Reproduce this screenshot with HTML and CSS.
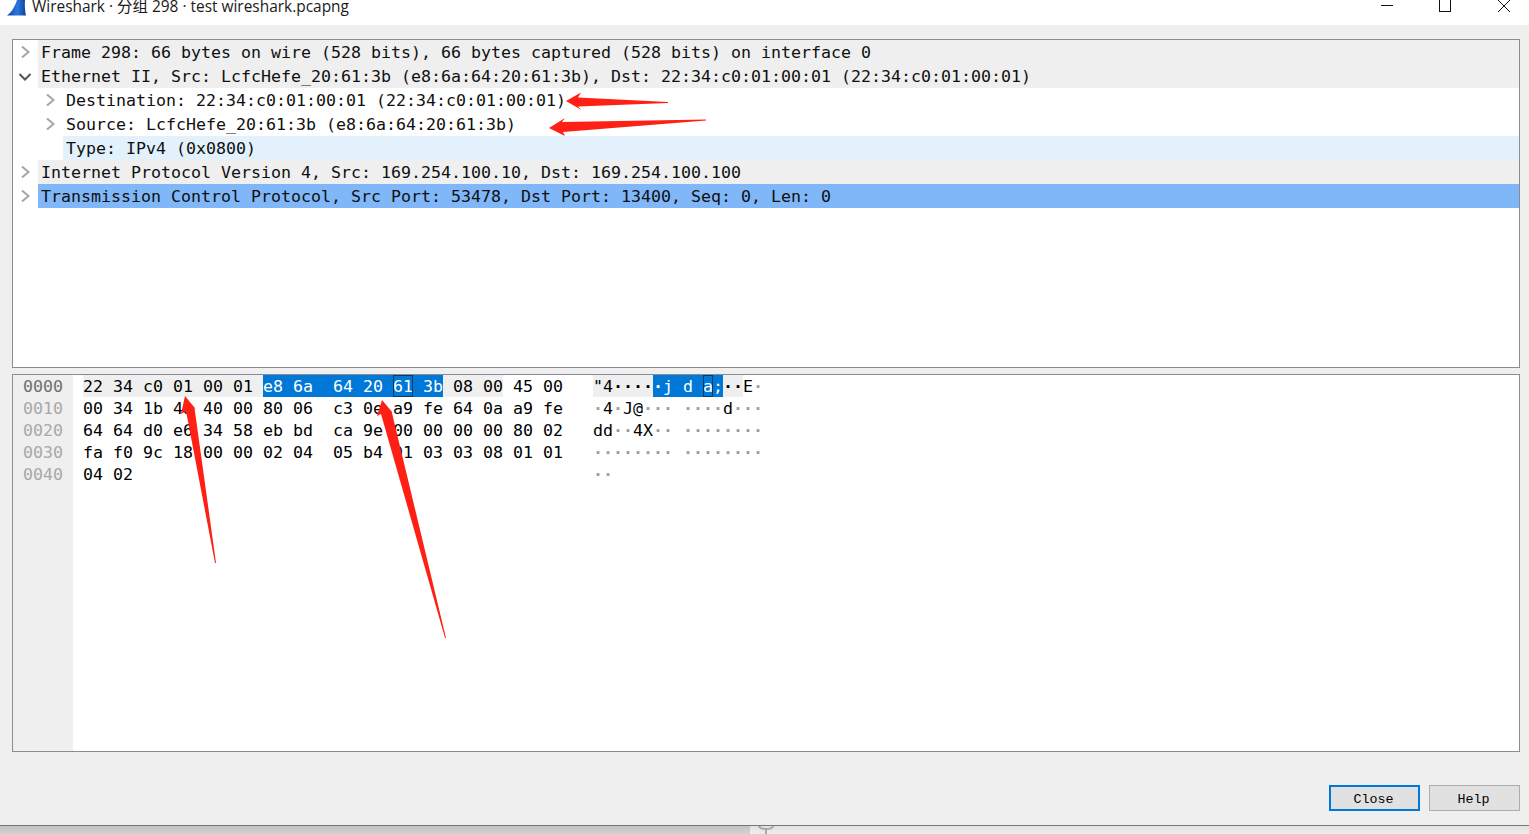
FILE: index.html
```html
<!DOCTYPE html>
<html lang="en">
<head>
<meta charset="utf-8">
<title>Wireshark</title>
<link rel="stylesheet" href="styles.css">
</head>
<body>
<div class="window">
  <header class="titlebar">
    <svg class="app-icon" viewBox="0 0 20 16" width="20" height="16"><defs><linearGradient id="fin" x1="0" y1="0" x2="1" y2="0"><stop offset="0" stop-color="#0b3fa8"/><stop offset="0.55" stop-color="#2a78de"/><stop offset="1" stop-color="#0d3f9a"/></linearGradient></defs><path d="M0 15.500C5 12 8 6 10 0H18C17.500 5 18 11 19 15.500Z" fill="url(#fin)"/></svg>
    <span class="title">Wireshark · 分组 298 · test wireshark.pcapng</span>
    <div class="controls">
      <svg class="ctl ctl-min" width="12" height="12" viewBox="0 0 12 12"><path d="M0 5.500H12" stroke="#111" fill="none"/></svg>
      <svg class="ctl ctl-max" width="13" height="12" viewBox="0 0 13 12"><rect x="0.500" y="-1" width="11" height="12.500" stroke="#111" fill="none"/></svg>
      <svg class="ctl ctl-close" width="12" height="12" viewBox="0 0 12 12"><path d="M0 0L12 12M12 0L0 12" stroke="#111" fill="none"/></svg>
    </div>
  </header>

  <main class="body">
    <section class="tree">
      <div class="row top"><span class="twisty"><svg width="9" height="12" viewBox="0 0 9 12"><path d="M1 0.500L7.500 6L1 11.500" class="chev"/></svg></span><span class="label">Frame 298: 66 bytes on wire (528 bits), 66 bytes captured (528 bits) on interface 0</span></div>
      <div class="row top"><span class="twisty"><svg width="13" height="9" viewBox="0 0 13 9"><path d="M0.500 2L6 7.500L11.500 2" class="chev open"/></svg></span><span class="label">Ethernet II, Src: LcfcHefe_20:61:3b (e8:6a:64:20:61:3b), Dst: 22:34:c0:01:00:01 (22:34:c0:01:00:01)</span></div>
      <div class="row child"><span class="twisty"><svg width="9" height="12" viewBox="0 0 9 12"><path d="M1 0.500L7.500 6L1 11.500" class="chev"/></svg></span><span class="label">Destination: 22:34:c0:01:00:01 (22:34:c0:01:00:01)</span></div>
      <div class="row child"><span class="twisty"><svg width="9" height="12" viewBox="0 0 9 12"><path d="M1 0.500L7.500 6L1 11.500" class="chev"/></svg></span><span class="label">Source: LcfcHefe_20:61:3b (e8:6a:64:20:61:3b)</span></div>
      <div class="row child related"><span class="twisty"></span><span class="label">Type: IPv4 (0x0800)</span></div>
      <div class="row top"><span class="twisty"><svg width="9" height="12" viewBox="0 0 9 12"><path d="M1 0.500L7.500 6L1 11.500" class="chev"/></svg></span><span class="label">Internet Protocol Version 4, Src: 169.254.100.10, Dst: 169.254.100.100</span></div>
      <div class="row top selected"><span class="twisty"><svg width="9" height="12" viewBox="0 0 9 12"><path d="M1 0.500L7.500 6L1 11.500" class="chev"/></svg></span><span class="label">Transmission Control Protocol, Src Port: 53478, Dst Port: 13400, Seq: 0, Len: 0</span></div>
    </section>

    <section class="bytes">
      <div class="offsets">
        <div class="line off-active">0000</div>
        <div class="line">0010</div>
        <div class="line">0020</div>
        <div class="line">0030</div>
        <div class="line">0040</div>
      </div>
      <div class="hex">
        <div class="line"><span class="shade">22 34 c0 01 00 01 </span><span class="sel">e8 6a  64 20 <span class="cur">61</span> 3b</span><span class="shade"> 08 00</span> 45 00</div>
        <div class="line">00 34 1b 4a 40 00 80 06  c3 0e a9 fe 64 0a a9 fe</div>
        <div class="line">64 64 d0 e6 34 58 eb bd  ca 9e 00 00 00 00 80 02</div>
        <div class="line">fa f0 9c 18 00 00 02 04  05 b4 01 03 03 08 01 01</div>
        <div class="line">04 02</div>
      </div>
      <div class="ascii">
        <div class="line"><span class="shade">"4<i>····</i></span><span class="sel"><i>·</i>j d <span class="cur">a</span>;</span><span class="shade"><i>··</i></span>E<i>·</i></div>
        <div class="line"><i>·</i>4<i>·</i>J@<i>···</i> <i>····</i>d<i>···</i></div>
        <div class="line">dd<i>··</i>4X<i>··</i> <i>········</i></div>
        <div class="line"><i>········</i> <i>········</i></div>
        <div class="line"><i>··</i></div>
      </div>
    </section>

    <div class="actions">
      <button class="btn btn-default" type="button">Close</button>
      <button class="btn" type="button">Help</button>
    </div>
  </main>

  <footer class="desktop">
    <div class="desk-left"></div>
    <div class="desk-right"><svg class="desk-glyph" width="18" height="9" viewBox="0 0 18 9"><path d="M2 0C3 4 15 4 16 0M9 4V9" stroke="#a8a8a8" stroke-width="2" fill="none"/></svg></div>
  </footer>

  <svg class="arrows" width="1529" height="834" viewBox="0 0 1529 834">
    <path class="arrow" d="M566 101L581 92.500L578 97.500L668 102L668 103L578 106.500L581.500 110Z"/>
    <path class="arrow" d="M549 128L565 118L562 122L706 119.500L706 120.500L563 132L565 136Z"/>
    <path class="arrow" d="M185 396L196.500 410L194.500 408L216 563L215 563L186 411L181 414Z"/>
    <path class="arrow" d="M382 400L393 413L391.500 411L446 638L445 638L381 414L377 416Z"/>
  </svg>
</div>
</body>
</html>
```
FILE: styles.css
```css
* { box-sizing: border-box; }
html, body { margin: 0; padding: 0; height: 100%; overflow: hidden; }
body { background: #efefef; }

.window {
  position: relative;
  width: 1529px;
  height: 834px;
  display: flex;
  flex-direction: column;
  font-family: "DejaVu Sans Mono", "Liberation Mono", monospace;
  color: #000;
}

.titlebar {
  height: 25px;
  background: #fff;
  display: flex;
  align-items: flex-start;
  padding-left: 7px;
  flex: none;
}
.app-icon { display: block; flex: none; }
.title {
  margin-left: 5px;
  font: 15.45px/12px "Open Sans", "Noto Sans CJK SC", sans-serif;
  color: #1a1a1a;
  white-space: nowrap;
}
.controls { margin-left: auto; display: flex; align-items: flex-start; padding-right: 19px; }
.ctl { display: block; }
.ctl-max { margin-left: 46px; }
.ctl-close { margin-left: 46px; }

.body {
  flex: 1;
  display: flex;
  flex-direction: column;
  padding: 14px 9px 14px 12px;
  background: #efefef;
  min-height: 0;
}

.tree {
  height: 329px;
  flex: none;
  border: 1px solid #8b8b97;
  background: #fff;
}
.row {
  height: 24px;
  display: flex;
  font-size: 16.61px;
  line-height: 24px;
  white-space: pre;
}
.row.child { padding-left: 25px; }
.twisty {
  width: 25px;
  flex: none;
  display: flex;
  align-items: center;
  justify-content: center;
}
.label { flex: 1; padding: 1px 0 0 3px; color: #101010; }
.row.top .label { background: #efefef; }
.row.related .label { background: #e3f1fc; }
.row.selected .label { background: #80b7f8; }
.chev { fill: none; stroke: #a6a6a6; stroke-width: 2; }
.chev.open { stroke: #555; }

.bytes {
  margin-top: 6px;
  height: 378px;
  flex: none;
  border: 1px solid #8b8b97;
  background: #fff;
  display: flex;
  font-size: 16.61px;
  line-height: 24px;
}
.line { height: 22px; white-space: pre; }
.offsets {
  width: 60px;
  flex: none;
  padding-left: 10px;
  background: #efefef;
  color: #a8a8a8;
}
.off-active { color: #6e6e6e; }
.hex { margin-left: 10px; width: 480px; flex: none; }
.ascii { margin-left: 30px; }
.shade { display: inline-block; background: #efefef; height: 22px; }
.sel { display: inline-block; background: #0078d7; color: #fff; height: 22px; }
.cur { display: inline-block; height: 22px; outline: 1px solid #0d3a63; outline-offset: -1px; }
.ascii i { font-style: normal; font-weight: 700; color: #a39c96; }
.ascii .shade i { color: #000; }
.ascii .sel i { color: #fff; }

.actions {
  margin-top: 33px;
  display: flex;
  justify-content: flex-end;
  gap: 9px;
}
.btn {
  width: 91px;
  height: 26px;
  padding: 3px 2px 0 0;
  background: #e1e1e1;
  border: 1px solid #adadad;
  font: 13.33px/18px "Liberation Mono", monospace;
  color: #000;
}
.btn-default { border: 2px solid #0078d7; }

.desktop {
  height: 9px;
  flex: none;
  display: flex;
  border-top: 1px solid #767676;
}
.desk-left { width: 750px; background: linear-gradient(#c2c2c2, #d2d2d2); }
.desk-right { flex: 1; background: linear-gradient(#e2e2e2, #eeeeee); }
.desk-glyph { display: block; margin-left: 7px; }

.arrows { position: absolute; left: 0; top: 0; pointer-events: none; }
.arrow { fill: #ff2015; }
```
